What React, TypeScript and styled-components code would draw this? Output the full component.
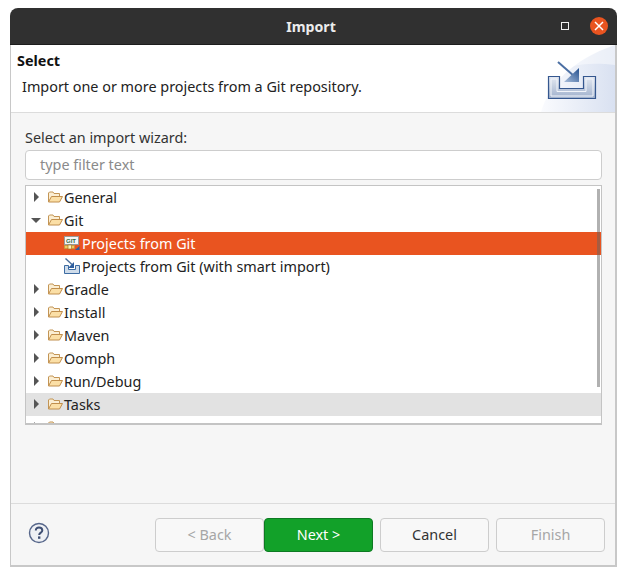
import styled, { createGlobalStyle } from "styled-components";

const GlobalStyle = createGlobalStyle`
    html, body {
        margin: 0;
        padding: 0;
        background: #fff;
        font-family: "Noto Sans", "Open Sans", sans-serif;
    }
`

const Page = styled.div`
    width: 627px;
    height: 576px;
    padding: 8px 10px 9px;
    box-sizing: border-box;
    overflow: hidden;
`

const Window = styled.div`
    width: 607px;
    height: 559px;
    display: flex;
    flex-direction: column;
    border-radius: 8px 8px 0 0;
    overflow: hidden;
`

const TitleBar = styled.div`
    position: relative;
    flex: none;
    height: 37px;
    padding: 0 5px 0 0;
    display: flex;
    align-items: center;
    justify-content: center;
    background: #303030;
    border-bottom: 1px solid #1d1d1d;
    box-sizing: border-box;
    color: #ececec;
    font-size: 14.2px;
    font-weight: 700;
`

const WindowControls = styled.div`
    position: absolute;
    right: 9px;
    top: 9px;
    display: flex;
    align-items: center;
    gap: 21px;
`

const MaximizeButton = styled.div`
    width: 6px;
    height: 6px;
    border: 1px solid #f2f2f2;
`

const CloseButton = styled.div`
    width: 18px;
    height: 18px;
    display: flex;
    align-items: center;
    justify-content: center;
    border-radius: 50%;
    background: #e95420;
`

const Body = styled.div`
    flex: 1;
    display: flex;
    flex-direction: column;
    background: #f6f6f6;
    border-left: 1px solid #c8c8c8;
    border-right: 2px solid #c8c8c8;
    border-bottom: 2px solid #c8c8c8;
`

const Banner = styled.div`
    position: relative;
    flex: none;
    height: 68px;
    box-sizing: border-box;
    padding: 6px 6px 0;
    background: #fff;
    border-bottom: 1px solid #dcdcdc;
    overflow: hidden;
`

const BannerTitle = styled.div`
    color: #111;
    font-size: 14.4px;
    font-weight: 700;
    line-height: 19px;
`

const BannerText = styled.div`
    margin: 7px 0 0 5px;
    color: #222;
    font-size: 14.4px;
    line-height: 19px;
`

const BannerArt = styled.svg`
    position: absolute;
    right: 0;
    top: 0;
`

const Content = styled.div`
    flex: 1;
    display: flex;
    flex-direction: column;
    padding: 15px 13px 0 14px;
`

const FieldLabel = styled.div`
    color: #333;
    font-size: 14.4px;
    line-height: 19px;
    margin-bottom: 3px;
`

const FilterInput = styled.div`
    height: 30px;
    box-sizing: border-box;
    padding: 0 14px 2px;
    display: flex;
    align-items: center;
    background: #fff;
    border: 1px solid #cdcdcd;
    border-radius: 4px;
    color: #8a8a8a;
    font-size: 14.4px;
`

const Tree = styled.div`
    position: relative;
    height: 240px;
    margin-top: 5px;
    box-sizing: border-box;
    background: #fff;
    border: 1px solid #c4c4c4;
    border-bottom-width: 2px;
    overflow: hidden;
`

const Row = styled.div<{ $child?: boolean; $state?: "selected" | "hover" }>`
    height: 23px;
    box-sizing: border-box;
    padding: 0 0 1px ${p => p.$child ? "38px" : "4px"};
    display: flex;
    align-items: center;
    background: ${p => p.$state === "selected" ? "#e95420" : p.$state === "hover" ? "#e2e2e2" : "transparent"};
    color: ${p => p.$state === "selected" ? "#fff" : "#222"};
    font-size: 14.4px;
    white-space: nowrap;
`

const Twisty = styled.svg`
    flex: none;
    width: 16px;
    height: 16px;
    margin-right: 1px;
`

const RowIcon = styled.svg`
    flex: none;
    width: 16px;
    height: 16px;
    margin-right: 2px;
`

const FolderGlyph = styled(RowIcon)`
    margin-right: 1px;
`

const Scrollbar = styled.div`
    position: absolute;
    right: 1px;
    top: 3px;
    width: 3px;
    height: 198px;
    background: rgba(100, 100, 100, 0.5);
`

const Footer = styled.div`
    flex: none;
    height: 62px;
    box-sizing: border-box;
    padding: 14px 10px 0 17px;
    display: flex;
    align-items: flex-start;
    border-top: 1px solid #dcdcdc;
`

const HelpIcon = styled.svg`
    margin: 4px auto 0 0;
    width: 22px;
    height: 22px;
`

const Button = styled.button<{ $primary?: boolean; $gap?: boolean }>`
    width: 109px;
    height: 34px;
    margin-left: ${p => p.$gap ? "7px" : "0"};
    padding: 0 0 2px;
    border-radius: 4px;
    border: 1px solid ${p => p.$primary ? "#0d7a22" : "#cdcdcd"};
    background: ${p => p.$primary ? "#12a129" : "#f8f8f8"};
    color: ${p => p.$primary ? "#fff" : p.disabled ? "#a6a6a6" : "#333"};
    font-family: inherit;
    font-size: 14.4px;
`

const GitLabel = styled.text`
    font-family: "Liberation Sans", sans-serif;
    font-size: 6px;
    font-weight: 700;
    fill: #2f6b45;
`

function ClosedTwisty() {
    return <Twisty viewBox="0 0 16 16"><path d="M4 3L9 8L4 13Z" fill="#555" /></Twisty>
}

function OpenTwisty() {
    return <Twisty viewBox="0 0 16 16"><path d="M1 6H11L6 11Z" fill="#555" /></Twisty>
}

function FolderIcon() {
    return (
        <FolderGlyph viewBox="0 0 16 16">
            <path d="M1.5 13V4L2.5 3H6L7 4.5H12.5V7" fill="#fbeed3" stroke="#c39555" />
            <path d="M1.5 13L4.5 7.5H15.5L12.5 13Z" fill="#fbdfa6" stroke="#c08e4c" strokeLinejoin="round" />
        </FolderGlyph>
    )
}

function GitIcon() {
    return (
        <RowIcon viewBox="0 0 16 16">
            <rect x="0.5" y="1.5" width="14" height="8" fill="#f6f6f6" stroke="#9a9a9a" />
            <GitLabel x="2" y="8">GIT</GitLabel>
            <rect x="0.5" y="10.5" width="10" height="3" fill="#f0c860" stroke="#c09a40" strokeWidth="0.7" />
            <rect x="4" y="10" width="3.5" height="4" fill="#fff3c0" stroke="#a87a20" strokeWidth="0.7" />
            <path d="M11 15H15.5V11Z" fill="#2f5f9f" />
        </RowIcon>
    )
}

function ImportIcon() {
    return (
        <RowIcon viewBox="0 0 16 16">
            <path d="M0.5 7.5H4.5V11.5H11.5V7.5H15.5V15.5H0.5Z" fill="#cfdcea" stroke="#3d6ca3" />
            <path d="M1.5 0.5L8 6.5" stroke="#4a6d9a" strokeWidth="1.4" />
            <path d="M4 10H10V4Z" fill="#2f5f9f" />
        </RowIcon>
    )
}

const folders = ["Gradle", "Install", "Maven", "Oomph", "Run/Debug"]

export default function App() {
    return (
        <Page>
            <GlobalStyle />
            <Window>
                <TitleBar>
                    Import
                    <WindowControls>
                        <MaximizeButton />
                        <CloseButton>
                            <svg width="10" height="10" viewBox="0 0 10 10">
                                <path d="M1 1L9 9M9 1L1 9" stroke="#fff" strokeWidth="1.5" />
                            </svg>
                        </CloseButton>
                    </WindowControls>
                </TitleBar>
                <Body>
                    <Banner>
                        <BannerTitle>Select</BannerTitle>
                        <BannerText>Import one or more projects from a Git repository.</BannerText>
                        <BannerArt width="74" height="67" viewBox="0 0 74 67">
                            <defs>
                                <linearGradient id="swoosh" x1="0" y1="0" x2="1" y2="0">
                                    <stop offset="0" stopColor="#fafbfe" />
                                    <stop offset="1" stopColor="#d9e1f1" />
                                </linearGradient>
                                <linearGradient id="tray" x1="0" y1="0" x2="0" y2="1">
                                    <stop offset="0" stopColor="#e4e9f2" />
                                    <stop offset="1" stopColor="#9fb0cc" />
                                </linearGradient>
                                <linearGradient id="head" x1="0" y1="1" x2="1" y2="0">
                                    <stop offset="0" stopColor="#a9bedb" />
                                    <stop offset="1" stopColor="#24508f" />
                                </linearGradient>
                            </defs>
                            <path d="M0 67C8 40 30 15 74 0V67Z" fill="url(#swoosh)" />
                            <path d="M29 22C42 18 58 18 74 20V0C54 6 40 12 29 22Z" fill="#fff" opacity="0.45" />
                            <path d="M7.5 31.5H18.5V43.5H42.5V31.5H54.5V53.5H7.5Z" fill="url(#tray)" stroke="#35578f" strokeWidth="1.2" />
                            <path d="M10 34H16V46.5H45V34H52V51H10Z" fill="none" stroke="#f2f5fa" />
                            <path d="M17 17L33 31" stroke="#4b6fa3" strokeWidth="2" />
                            <path d="M23 37H38V23Z" fill="url(#head)" />
                        </BannerArt>
                    </Banner>
                    <Content>
                        <FieldLabel>Select an import wizard:</FieldLabel>
                        <FilterInput>type filter text</FilterInput>
                        <Tree>
                            <Row><ClosedTwisty /><FolderIcon />General</Row>
                            <Row><OpenTwisty /><FolderIcon />Git</Row>
                            <Row $child $state="selected"><GitIcon />Projects from Git</Row>
                            <Row $child><ImportIcon />Projects from Git (with smart import)</Row>
                            {folders.map(name => (
                                <Row key={name}><ClosedTwisty /><FolderIcon />{name}</Row>
                            ))}
                            <Row $state="hover"><ClosedTwisty /><FolderIcon />Tasks</Row>
                            <Row><ClosedTwisty /><FolderIcon />Team</Row>
                            <Scrollbar />
                        </Tree>
                    </Content>
                    <Footer>
                        <HelpIcon viewBox="0 0 22 22">
                            <circle cx="11" cy="11" r="9.5" fill="#eef0f4" stroke="#56668a" strokeWidth="1.4" />
                            <path d="M7.8 8.5C7.8 6.6 9.2 5.6 11 5.6C12.9 5.6 14.3 6.7 14.3 8.4C14.3 10.6 11.2 10.6 11.2 13" fill="none" stroke="#3f4f73" strokeWidth="2" />
                            <rect x="10" y="14.4" width="2.4" height="2.4" fill="#3f4f73" />
                        </HelpIcon>
                        <Button disabled>&lt; Back</Button>
                        <Button $primary>Next &gt;</Button>
                        <Button $gap>Cancel</Button>
                        <Button $gap disabled>Finish</Button>
                    </Footer>
                </Body>
            </Window>
        </Page>
    )
}
